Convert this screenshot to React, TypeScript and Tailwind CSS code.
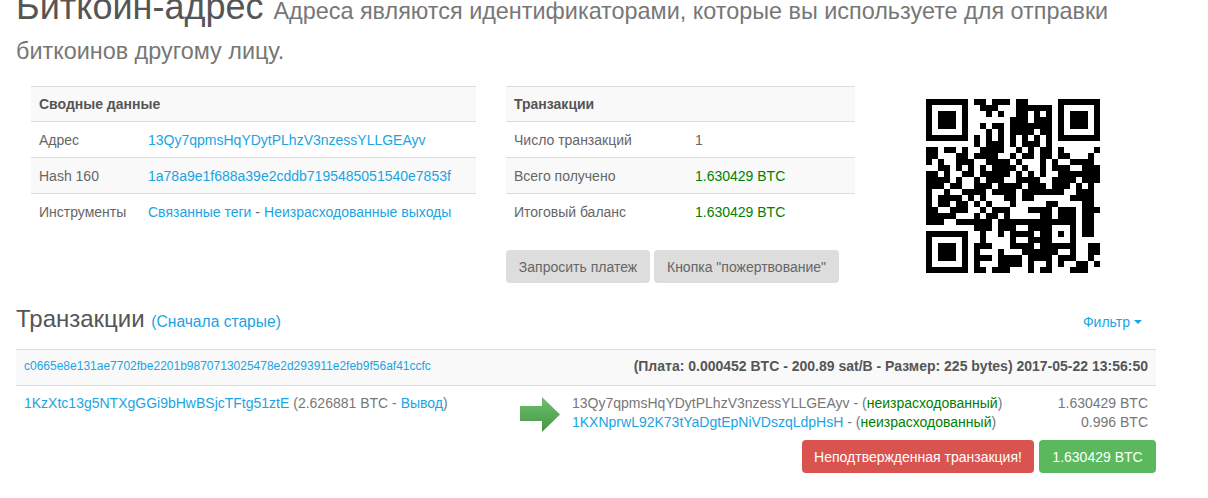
const qrRows = [
  '1111111.11.111.11.....1111111',
  '1.....1..111...111111.1.....1',
  '1.111.1...1.1..11.1.1.1.111.1',
  '1.111.1.......111.111.1.111.1',
  '1.111.1..1.11.1111111.1.111.1',
  '1.....1...1.1.1111.11.1.....1',
  '1111111.1.1.1.1.1.1.1.1111111',
  '........1.111.1.111.1........',
  '11.11.1..1111..1.1.11.1.....1',
  '11...11.1111..1.11.11.11...1.',
  '1.1..111..1111.1...1.1..1111.',
  '..11.1.1.1.1111.1..1.111..111',
  '11.1..11.11111.1.1.1..1111111',
  '1111.1..1.111..1111..1111.111',
  '111.11..111.1111.111.111.1.1.',
  '1..1..1111.1111.1111111..111.',
  '1.1111.1.1...11.11......1111.',
  '1.11.11.1.1...1.....11....11.',
  '11..111..1.111...1111.111.111',
  '11111...1.11.1.....11.111.11.',
  '111..111111.1111111111111.11.',
  '........111.111..1111...1.11.',
  '1111111..1..1.1111.11.1.1.11.',
  '1.....1..1....1..1111...1....',
  '1.111.1.111...1111.111111..11',
  '1.111.1.1...1...111111..1..11',
  '1.111.1.111.1111.1111.111..1.',
  '1.....1.1...1111.1..1.1..11.1',
  '1111111.11.111...1.11...111..',
];

function QrCode() {
  return (
    <svg width="174" height="174" viewBox="0 0 29 29" shapeRendering="crispEdges">
      {qrRows.map((row, y) =>
        row.split('').map((cell, x) =>
          cell === '1' ? <rect key={`${x}-${y}`} x={x} y={y} width="1" height="1" fill="#000" /> : null
        )
      )}
    </svg>
  );
}

function GreenArrow() {
  return (
    <svg width="42" height="36" viewBox="0 0 42 36">
      <defs>
        <linearGradient id="arrowFill" x1="0" y1="0" x2="0" y2="1">
          <stop offset="0" stopColor="#6cc36c" />
          <stop offset="1" stopColor="#479347" />
        </linearGradient>
      </defs>
      <path d="M1 9H23V0L41 17.5L23 35V24H1Z" fill="url(#arrowFill)" />
    </svg>
  );
}

const link = 'text-[#19a4e4]';

export default function App() {
  return (
    <div className="h-[498px] w-[1208px] overflow-hidden bg-white font-['Liberation_Sans',Arial,sans-serif] text-sm text-[#666]">
      <div className="ml-4 w-[1140px]">
        <h1 className="mt-[-13px] text-[36px] leading-[39.6px] text-[#555]">
          Биткоин-адрес{' '}
          <small className="text-[23.4px] leading-none text-[#777]">
            Адреса являются идентификаторами, которые вы используете для отправки биткоинов другому лицу.
          </small>
        </h1>

        <div className="mt-[20px] flex">
          <div className="ml-[15px] w-[445px]">
            <div className="flex h-9 items-center border-y border-[#ddd] bg-[#f9f9f9] px-2 font-bold text-[#555]">Сводные данные</div>
            <div className="flex h-9 items-center border-b border-[#ddd] px-2">
              <span className="w-[109px]">Адрес</span>
              <span className={link}>13Qy7qpmsHqYDytPLhzV3nzessYLLGEAyv</span>
            </div>
            <div className="flex h-9 items-center border-b border-[#ddd] bg-[#f9f9f9] px-2">
              <span className="w-[109px]">Hash 160</span>
              <span className={link}>1a78a9e1f688a39e2cddb7195485051540e7853f</span>
            </div>
            <div className="flex h-9 items-center px-2">
              <span className="w-[109px]">Инструменты</span>
              <span className={link}>Связанные теги</span>
              <span className="mx-1">-</span>
              <span className={link}>Неизрасходованные выходы</span>
            </div>
          </div>

          <div className="ml-[30px] w-[349px]">
            <div className="flex h-9 items-center border-y border-[#ddd] bg-[#f9f9f9] px-2 font-bold text-[#555]">Транзакции</div>
            <div className="flex h-9 items-center border-b border-[#ddd] px-2">
              <span className="w-[181px]">Число транзакций</span>
              <span>1</span>
            </div>
            <div className="flex h-9 items-center border-b border-[#ddd] bg-[#f9f9f9] px-2">
              <span className="w-[181px]">Всего получено</span>
              <span className="text-[#008000]">1.630429 BTC</span>
            </div>
            <div className="flex h-9 items-center px-2">
              <span className="w-[181px]">Итоговый баланс</span>
              <span className="text-[#008000]">1.630429 BTC</span>
            </div>
            <div className="mt-5 flex gap-1">
              <button className="h-[33px] w-[144px] rounded bg-[#ddd] text-[#666]">Запросить платеж</button>
              <button className="h-[33px] w-[185px] rounded bg-[#ddd] text-[#666]">Кнопка "пожертвование"</button>
            </div>
          </div>

          <div className="ml-[71px] mt-[13px]">
            <QrCode />
          </div>
        </div>

        <div className="mt-[19px] flex items-center justify-between">
          <div className="text-2xl leading-[34px] text-[#555]">
            Транзакции <span className={`text-[15.6px] ${link}`}>(Сначала старые)</span>
          </div>
          <div className={`mr-[14px] mt-[2px] flex items-center gap-1 ${link}`}>
            Фильтр
            <span className="border-x-4 border-t-4 border-x-transparent border-t-[#19a4e4]" />
          </div>
        </div>

        <div className="mt-[10px] flex h-[37px] items-center justify-between border-y border-[#ddd] bg-[#f9f9f9] px-2 pb-[3px]">
          <span className={`text-xs ${link}`}>c0665e8e131ae7702fbe2201b9870713025478e2d293911e2feb9f56af41ccfc</span>
          <span className="font-bold text-[#555]">(Плата: 0.000452 BTC - 200.89 sat/B - Размер: 225 bytes) 2017-05-22 13:56:50</span>
        </div>

        <div className="flex px-2 pt-2 text-[#777]">
          <div className="w-[495px] leading-[19px]">
            <span className={link}>1KzXtc13g5NTXgGGi9bHwBSjcTFtg51ztE</span> (2.626881 BTC - <span className={link}>Вывод</span>)
          </div>
          <div className="mt-[3px] w-[53px]">
            <GreenArrow />
          </div>
          <div className="flex-1 leading-[19px]">
            <div className="flex justify-between">
              <span>
                13Qy7qpmsHqYDytPLhzV3nzessYLLGEAyv - (<span className="text-[#008000]">неизрасходованный</span>)
              </span>
              <span>1.630429 BTC</span>
            </div>
            <div className="flex justify-between">
              <span>
                <span className={link}>1KXNprwL92K73tYaDgtEpNiVDszqLdpHsH</span> - (<span className="text-[#008000]">неизрасходованный</span>)
              </span>
              <span>0.996 BTC</span>
            </div>
          </div>
        </div>

        <div className="mt-[7px] flex justify-end gap-[5px]">
          <button className="h-[33px] w-[232px] rounded bg-[#d9534f] text-white">Неподтвержденная транзакция!</button>
          <button className="h-[33px] w-[117px] rounded bg-[#5cb85c] text-white">1.630429 BTC</button>
        </div>
      </div>
    </div>
  );
}
